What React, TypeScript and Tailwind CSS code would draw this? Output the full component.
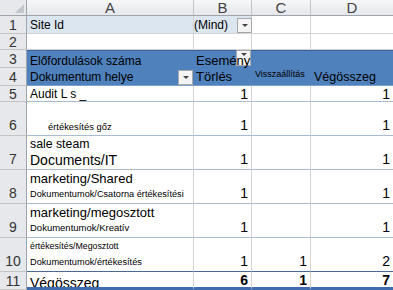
import React from "react";

const F = { fontFamily: '"Liberation Sans", Arial, sans-serif' };

function Drop({ className }: { className: string }) {
  return (
    <div className={`absolute flex items-center justify-center border border-[#a8a8a8] bg-[#f4f4f4] ${className}`}>
      <div className="h-0 w-0 border-x-[3px] border-t-[3px] border-x-transparent border-t-[#444]" />
    </div>
  );
}

function RowHead({ n, tall }: { n: number; tall?: boolean }) {
  return (
    <div
      className={`flex justify-center border-b border-r border-b-[#c4c4c4] border-r-[#9ea4ad] bg-[#e6e8eb] text-[14px] leading-none text-[#333] ${
        tall ? "items-end pb-[3px]" : "items-center"
      }`}
    >
      {n}
    </div>
  );
}

function Num({ v, bold, last, tall }: { v?: string; bold?: boolean; last?: boolean; tall?: boolean }) {
  return (
    <div
      className={`flex justify-end pr-[3px] text-[14px] leading-none text-black ${tall ? "items-end pb-[3px]" : "items-center"} ${
        last ? "" : "border-r border-r-[#d4d4d4]"
      } border-b border-b-[#a9bcd3] ${bold ? "font-bold" : ""}`}
    >
      {v}
    </div>
  );
}

function Col({ l, last }: { l: string; last?: boolean }) {
  return (
    <div
      className={`flex items-center justify-center border-b border-b-[#9ea4ad] bg-gradient-to-b from-[#f6f7f9] to-[#e5e7ea] text-[15px] leading-none text-[#444] ${
        last ? "" : "border-r border-r-[#c0c4ca]"
      }`}
    >
      {l}
    </div>
  );
}

export default function App() {
  return (
    <div className="relative h-[290px] w-[393px] overflow-hidden bg-white" style={F}>
      <div className="grid h-[290px] w-[393px] grid-cols-[27px_167px_58px_59px_82px] grid-rows-[16px_18px_16px_18px_18px_16px_34px_34px_34px_34px_34px_18px]">
        {/* header row */}
        <div className="relative border-b border-r border-b-[#9ea4ad] border-r-[#9ea4ad] bg-[#e6e8eb]">
          <div className="absolute bottom-[2px] right-[2px] h-0 w-0 border-b-[9px] border-l-[9px] border-b-[#c3c6cb] border-l-transparent" />
        </div>
        <Col l="A" />
        <Col l="B" />
        <Col l="C" />
        <Col l="D" last />

        {/* row 1 */}
        <RowHead n={1} />
        <div className="flex items-center border-b border-r border-b-[#d4d4d4] border-r-[#d4d4d4] bg-[#dce6f1] pl-[3px] text-[12px] leading-none">Site Id</div>
        <div className="flex items-center border-b border-r border-b-[#d4d4d4] border-r-[#d4d4d4] bg-[#dce6f1] text-[12px] leading-none">(Mind)</div>
        <div className="border-b border-r border-b-[#d4d4d4] border-r-[#d4d4d4]" />
        <div className="border-b border-b-[#d4d4d4]" />

        {/* row 2 */}
        <RowHead n={2} />
        <div className="border-b border-r border-b-[#d4d4d4] border-r-[#d4d4d4]" />
        <div className="border-b border-r border-b-[#d4d4d4] border-r-[#d4d4d4]" />
        <div className="border-b border-r border-b-[#d4d4d4] border-r-[#d4d4d4]" />
        <div className="border-b border-b-[#d4d4d4]" />

        {/* row 3 */}
        <RowHead n={3} />
        <div className="flex items-end border-t border-t-[#3a62a0] bg-[#4f81bd] pb-[1px] pl-[3px] text-[12px] leading-none text-black">Előfordulások száma</div>
        <div className="flex items-end border-t border-t-[#3a62a0] bg-[#4f81bd] pb-[1px] pl-[2px] text-[13px] leading-none text-black">
          <span className="relative z-10">Esemény</span>
        </div>
        <div className="border-t border-t-[#3a62a0] bg-[#4f81bd]" />
        <div className="border-t border-t-[#3a62a0] bg-[#4f81bd]" />

        {/* row 4 */}
        <RowHead n={4} />
        <div className="flex items-center border-b border-b-[#7ea0cc] bg-[#4f81bd] pl-[3px] text-[12px] leading-none text-black">Dokumentum helye</div>
        <div className="flex items-center border-b border-b-[#7ea0cc] bg-[#4f81bd] pl-[2px] text-[13px] leading-none text-black">Törlés</div>
        <div className="flex items-start border-b border-b-[#7ea0cc] bg-[#4f81bd] pl-[3px] pt-[2px] text-[9px] leading-none text-black">Visszaállítás</div>
        <div className="flex items-center border-b border-b-[#7ea0cc] bg-[#4f81bd] pl-[3px] pt-[2px] text-[12.5px] leading-none text-black">Végösszeg</div>

        {/* row 5 */}
        <RowHead n={5} />
        <div className="flex items-center border-b border-r border-b-[#a9bcd3] border-r-[#d4d4d4] pl-[3px] text-[12px] leading-none">Audit L s _</div>
        <Num v="1" />
        <Num />
        <Num v="1" last />

        {/* row 6 */}
        <RowHead n={6} tall />
        <div className="flex items-end border-b border-r border-b-[#a9bcd3] border-r-[#d4d4d4] pb-[4px] pl-[21px] text-[9.4px] leading-none">értékesítés gőz</div>
        <Num v="1" tall />
        <Num tall />
        <Num v="1" last tall />

        {/* row 7 */}
        <RowHead n={7} tall />
        <div className="flex flex-col justify-end border-b border-r border-b-[#a9bcd3] border-r-[#d4d4d4] pb-[1px] pl-[3px] leading-none">
          <span className="text-[12.3px] leading-[15px]">sale steam</span>
          <span className="text-[14px] leading-[16px]">Documents/IT</span>
        </div>
        <Num v="1" tall />
        <Num tall />
        <Num v="1" last tall />

        {/* row 8 */}
        <RowHead n={8} tall />
        <div className="flex flex-col justify-end border-b border-r border-b-[#a9bcd3] border-r-[#d4d4d4] pb-[2px] pl-[3px] leading-none">
          <span className="text-[13px] leading-[16px]">marketing/Shared</span>
          <span className="text-[9.2px] leading-[14px]">Dokumentumok/Csatorna értékesítési</span>
        </div>
        <Num v="1" tall />
        <Num tall />
        <Num v="1" last tall />

        {/* row 9 */}
        <RowHead n={9} tall />
        <div className="flex flex-col justify-end border-b border-r border-b-[#a9bcd3] border-r-[#d4d4d4] pb-[2px] pl-[3px] leading-none">
          <span className="text-[13px] leading-[16px]">marketing/megosztott</span>
          <span className="text-[9.5px] leading-[14px]">Dokumentumok/Kreatív</span>
        </div>
        <Num v="1" tall />
        <Num tall />
        <Num v="1" last tall />

        {/* row 10 */}
        <RowHead n={10} tall />
        <div className="flex flex-col justify-end border-b border-r border-b-[#4a6a96] border-r-[#d4d4d4] pb-[2px] pl-[3px] leading-none">
          <span className="text-[8.8px] leading-[17px]">értékesítés/Megosztott</span>
          <span className="text-[9.2px] leading-[14px]">Dokumentumok/értékesítés</span>
        </div>
        <div className="flex items-end justify-end border-b border-r border-b-[#4a6a96] border-r-[#d4d4d4] pb-[3px] pr-[3px] text-[14px] leading-none">1</div>
        <div className="flex items-end justify-end border-b border-r border-b-[#4a6a96] border-r-[#d4d4d4] pb-[3px] pr-[3px] text-[14px] leading-none">1</div>
        <div className="flex items-end justify-end border-b border-b-[#4a6a96] pb-[3px] pr-[3px] text-[14px] leading-none">2</div>

        {/* row 11 */}
        <RowHead n={11} />
        <div className="flex items-end overflow-hidden border-b-[3px] border-r border-b-[#3f6cac] border-r-[#d4d4d4] pl-[3px] text-[14px] leading-none">
          <span className="translate-y-[3px]">Végösszeg</span>
        </div>
        <div className="flex items-start justify-end border-b-[3px] border-r border-b-[#3f6cac] border-r-[#d4d4d4] pr-[3px] pt-[1px] text-[14px] font-bold leading-none">6</div>
        <div className="flex items-start justify-end border-b-[3px] border-r border-b-[#3f6cac] border-r-[#d4d4d4] pr-[3px] pt-[1px] text-[14px] font-bold leading-none">1</div>
        <div className="flex items-start justify-end border-b-[3px] border-b-[#3f6cac] pr-[3px] pt-[1px] text-[14px] font-bold leading-none">7</div>
      </div>
      <Drop className="left-[237px] top-[18px] h-[15px] w-[15px]" />
      <Drop className="left-[236px] top-[50px] h-[16px] w-[15px] items-start pt-[2px]" />
      <Drop className="left-[178px] top-[70px] h-[15px] w-[15px]" />
    </div>
  );
}
